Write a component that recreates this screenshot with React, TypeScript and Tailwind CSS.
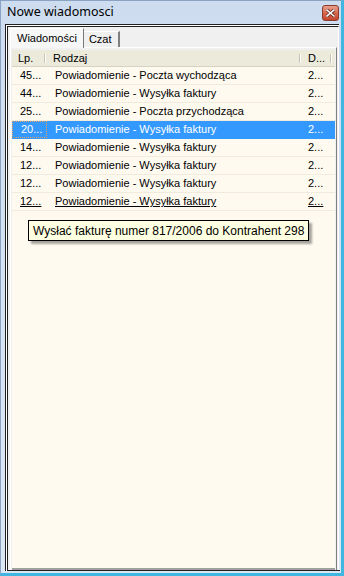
import React from "react";

const rows = [
  { lp: "45...", rodzaj: "Powiadomienie - Poczta wychodząca", d: "2..." },
  { lp: "44...", rodzaj: "Powiadomienie - Wysyłka faktury", d: "2..." },
  { lp: "25...", rodzaj: "Powiadomienie - Poczta przychodząca", d: "2..." },
  { lp: "20...", rodzaj: "Powiadomienie - Wysyłka faktury", d: "2...", selected: true },
  { lp: "14...", rodzaj: "Powiadomienie - Wysyłka faktury", d: "2..." },
  { lp: "12...", rodzaj: "Powiadomienie - Wysyłka faktury", d: "2..." },
  { lp: "12...", rodzaj: "Powiadomienie - Wysyłka faktury", d: "2..." },
  { lp: "12...", rodzaj: "Powiadomienie - Wysyłka faktury", d: "2...", hot: true },
];

const CloseButton = () => (
  <div className="w-[17px] h-[16px] rounded-[3px] border border-[#8a3b2b] bg-gradient-to-b from-[#e9a08e] via-[#d6684f] to-[#c2452b] flex items-center justify-center">
    <svg width="9" height="8" viewBox="0 0 9 8">
      <path d="M1 1 L8 7 M8 1 L1 7" stroke="#5a2014" strokeWidth="3" strokeLinecap="square" />
      <path d="M1 1 L8 7 M8 1 L1 7" stroke="#ffffff" strokeWidth="1.6" strokeLinecap="square" />
    </svg>
  </div>
);

const HeaderDivider = () => (
  <div className="flex h-[9px] mt-[1px]">
    <div className="w-px bg-[#c7c5b2]" />
    <div className="w-px bg-white" />
  </div>
);

export default function App() {
  return (
    <div
      className="w-[344px] h-[576px] flex flex-col bg-gradient-to-b from-[#cddcef] to-[#dce7f4] border-l border-t border-[#8aa3c2] border-r-[3px] border-r-[#40b6e0] border-b-[3px] border-b-[#40b6e0] overflow-hidden"
      style={{ fontFamily: '"Liberation Sans", Arial, sans-serif' }}
    >
      {/* title bar */}
      <div className="h-[23px] flex items-center justify-between pl-[6px] pr-[2px]">
        <span className="text-[12.5px] text-black" style={{ fontFamily: '"Noto Sans", sans-serif' }}>
          Nowe wiadomosci
        </span>
        <CloseButton />
      </div>

      {/* client */}
      <div className="flex-1 ml-[4px] mr-[2px] mb-[2px] border-l border-t border-[#202020] flex">
        <div className="flex-1 border-l border-t border-white flex">
          <div className="flex-1 border-l border-t border-[#202020] border-r border-r-white bg-[#f0f0f0] flex flex-col pl-[2px] pr-[1px] pt-[1px]">
            {/* tabs */}
            <div className="h-[19px] flex items-end text-[11px] text-black relative z-10">
              <div className="h-[20px] -mb-[1px] px-[6px] flex items-center bg-[#f7f7f7] border-l border-t border-white border-r border-r-[#7a7a7a]">
                Wiadomości
              </div>
              <div className="h-[16px] pl-[5px] pr-[6px] flex items-center border-t border-white border-r-2 border-r-[#808080]">
                Czat
              </div>
            </div>

            {/* tab panel */}
            <div className="flex-1 border-l border-t border-white border-r border-r-[#808080] flex flex-col">
              <div className="flex-1 mt-[2px] ml-[1px] mr-[1px] flex flex-col">
                <div className="flex-1 bg-[#fffaf0] flex flex-col">
                  {/* header */}
                  <div className="h-[17px] bg-[#ebeadb] flex items-center text-[11px] text-black border-b border-[#d6d2c2]">
                    <div className="w-[34px] pl-[6px] flex items-center justify-between">
                      <span>Lp.</span>
                      <HeaderDivider />
                    </div>
                    <div className="w-[255px] pl-[7px] flex items-center justify-between">
                      <span>Rodzaj</span>
                      <HeaderDivider />
                    </div>
                    <div className="w-[31px] pl-[7px] flex items-center justify-between">
                      <span>D...</span>
                      <HeaderDivider />
                    </div>
                  </div>
                  {/* rows */}
                  {rows.map((r, i) => (
                    <div
                      key={i}
                      className={
                        "h-[18px] flex items-center text-[11px] border-b " +
                        (r.selected
                          ? "bg-[#3399ff] text-white border-[#3399ff]"
                          : "text-black border-[#f0ebdd]") +
                        (r.hot ? " underline" : "")
                      }
                    >
                      <div
                        className={
                          "w-[35px] h-full pl-[8px] flex items-center " +
                          (r.selected ? "border border-dotted border-[#e8a060]" : "")
                        }
                      >
                        {r.lp}
                      </div>
                      <div className="w-[254px] pl-[8px]">{r.rodzaj}</div>
                      <div className="w-[30px] pl-[7px]">{r.d}</div>
                    </div>
                  ))}
                  {/* tooltip */}
                  <div className="mt-[9px] ml-[16px] self-start bg-[#ffffe1] border border-black px-[4px] h-[21px] flex items-center text-[12px] text-black shadow-[3px_3px_2px_rgba(0,0,0,0.35)]">
                    Wysłać fakturę numer 817/2006 do Kontrahent 298
                  </div>
                </div>
                <div className="h-[2px] bg-[#a0a0a0]" />
              </div>
            </div>
            <div className="h-px bg-[#202020] -mx-[3px]" />
          </div>
        </div>
      </div>
    </div>
  );
}
